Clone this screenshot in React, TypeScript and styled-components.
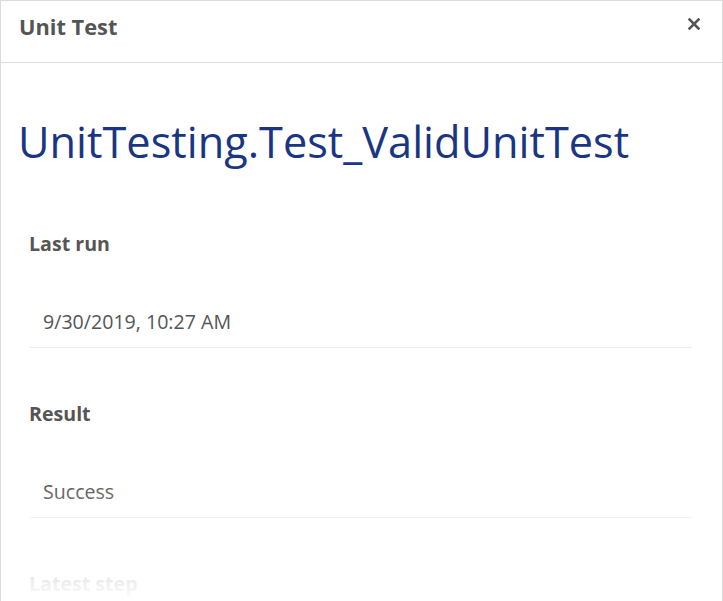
import React from "react";
import styled, { createGlobalStyle } from "styled-components";

const Global = createGlobalStyle`
  html, body { margin: 0; padding: 0; background: #fff; }
  body { font-family: "Open Sans", "Noto Sans", sans-serif; overflow: hidden; }
  * { box-sizing: border-box; }
`;

const Modal = styled.div`
  position: relative;
  width: 723px;
  height: 601px;
  border: 1px solid #dcdcdc;
  border-bottom: none;
  background: #fff;
  overflow: hidden;
`;

const Header = styled.div`
  display: flex;
  align-items: flex-start;
  justify-content: space-between;
  height: 62px;
  padding: 13px 21px 0 18px;
  border-bottom: 1px solid #dcdcdc;
`;

const HeaderTitle = styled.h4`
  margin: 0;
  font-size: 21.8px;
  line-height: 26px;
  font-weight: 700;
  color: #555;
`;

const CloseButton = styled.button`
  display: flex;
  align-items: center;
  justify-content: center;
  width: 14px;
  height: 14px;
  margin-top: 3px;
  padding: 0;
  border: none;
  background: none;
  color: #555;
  cursor: pointer;
`;

const Body = styled.div`
  padding: 53px 30px 0 17px;
`;

const Title = styled.h1`
  margin: 0 0 64px;
  font-size: 43.3px;
  line-height: 52px;
  font-weight: 400;
  color: #1a3683;
`;

const Section = styled.section`
  padding-left: 11px;
  margin-bottom: 54px;
`;

const Label = styled.div`
  font-size: 19.6px;
  line-height: 24px;
  font-weight: 700;
  color: #555;
`;

const Value = styled.div`
  margin: 54px 0 0 1px;
  padding: 0 0 13px 13px;
  font-size: 19.6px;
  line-height: 24px;
  color: #555;
  border-bottom: 1px solid #ececec;
`;

const Fade = styled.div`
  position: absolute;
  left: -1px;
  right: -1px;
  bottom: 0;
  height: 120px;
  background: linear-gradient(
    to bottom,
    rgba(255, 255, 255, 0) 0%,
    rgba(255, 255, 255, 0.5) 50%,
    rgba(255, 255, 255, 0.9) 85%,
    rgba(255, 255, 255, 1) 100%
  );
  pointer-events: none;
`;

const rows = [
  { label: "Last run", value: "9/30/2019, 10:27 AM" },
  { label: "Result", value: "Success" },
  { label: "Latest step", value: "" },
];

export default function App() {
  return (
    <>
      <Global />
      <Modal>
        <Header>
          <HeaderTitle>Unit Test</HeaderTitle>
          <CloseButton aria-label="Close">
            <svg width="12" height="12" viewBox="0 0 12 12">
              <path d="M1.5 1.5 L10.5 10.5 M10.5 1.5 L1.5 10.5" stroke="currentColor" strokeWidth="2.6" strokeLinecap="square" />
            </svg>
          </CloseButton>
        </Header>
        <Body>
          <Title>UnitTesting.Test_ValidUnitTest</Title>
          {rows.map((r) => (
            <Section key={r.label}>
              <Label>{r.label}</Label>
              {r.value && <Value>{r.value}</Value>}
            </Section>
          ))}
        </Body>
        <Fade />
      </Modal>
    </>
  );
}
